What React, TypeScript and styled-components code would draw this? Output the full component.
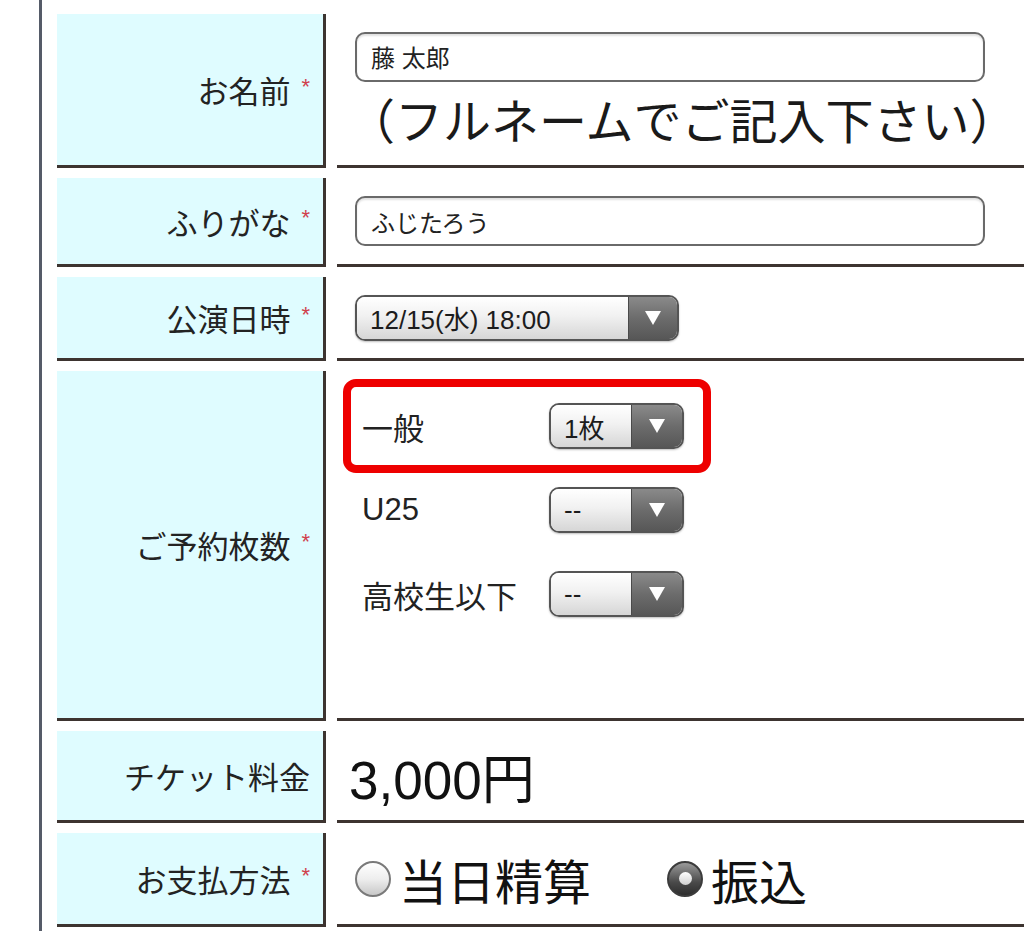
import React from 'react';
import styled, { createGlobalStyle } from 'styled-components';

const GlobalStyle = createGlobalStyle`
  html, body {
    margin: 0;
    padding: 0;
    background: #ffffff;
    overflow: hidden;
  }
  body {
    font-family: 'Liberation Sans', 'Noto Sans CJK JP', sans-serif;
    color: #1e1e1e;
  }
`;

const Page = styled.div`
  margin-left: 39px;
  border-left: 3px solid #555b68;
  min-height: 931px;
  box-sizing: border-box;
  padding: 14px 0 0 15px;
`;

const FormGrid = styled.div`
  display: grid;
  grid-template-columns: 269px 1fr;
  column-gap: 11px;
  row-gap: 10px;
`;

const LabelCell = styled.div<{ $h: number }>`
  height: ${p => p.$h}px;
  box-sizing: border-box;
  background: #dffcff;
  border-right: 3px solid #3d3430;
  border-bottom: 3px solid #3d3430;
  display: flex;
  align-items: center;
  justify-content: flex-end;
  padding-right: 13px;
  font-size: 31px;
  color: #232323;
`;

const Required = styled.span`
  color: #d0404c;
  font-size: 22px;
  margin-left: 11px;
  position: relative;
  top: -3px;
`;

const ValueCell = styled.div<{ $h: number; $top?: boolean }>`
  height: ${p => p.$h}px;
  box-sizing: border-box;
  border-bottom: 3px solid #3d3430;
  display: flex;
  flex-direction: column;
  justify-content: ${p => (p.$top ? 'flex-start' : 'center')};
  align-items: flex-start;
  padding: ${p => (p.$top ? '16px 0 0 14px' : '0 0 0 18px')};
`;

const TextInput = styled.input`
  width: 630px;
  height: 50px;
  box-sizing: border-box;
  border: 2px solid #6a6a6a;
  border-radius: 10px;
  background: #ffffff;
  box-shadow: inset 0 2px 2px rgba(0, 0, 0, 0.12);
  padding: 0 14px;
  font-family: 'Liberation Sans', 'Noto Sans CJK JP', sans-serif;
  font-size: 24px;
  color: #222;
  outline: none;
`;

const Hint = styled.div`
  font-family: 'Noto Sans CJK JP', sans-serif;
  font-size: 48px;
  line-height: 60px;
  margin: 6px 0 0 -8px;
  white-space: nowrap;
  color: #1a1a1a;
`;

const SelectBox = styled.div<{ $w: number }>`
  width: ${p => p.$w}px;
  height: 46px;
  box-sizing: border-box;
  border: 2px solid #555;
  border-radius: 10px;
  overflow: hidden;
  display: flex;
  box-shadow: 0 1px 2px rgba(0, 0, 0, 0.25);
`;

const SelectText = styled.div`
  flex: 1;
  display: flex;
  align-items: center;
  padding-left: 13px;
  font-size: 26px;
  color: #1c1c1c;
  background: linear-gradient(#ffffff, #f1f1f1 45%, #d6d6d6);
  border-right: 1px solid #4a4a4a;
`;

const SelectArrow = styled.div<{ $w: number }>`
  width: ${p => p.$w}px;
  display: flex;
  align-items: center;
  justify-content: center;
  background: linear-gradient(#8a8a8a, #6c6c6c 50%, #575757);

  &::after {
    content: '';
    width: 0;
    height: 0;
    border-left: 8px solid transparent;
    border-right: 8px solid transparent;
    border-top: 14px solid #ffffff;
  }
`;

const TicketList = styled.div`
  display: flex;
  flex-direction: column;
  gap: 6px;
`;

const TicketRow = styled.div<{ $mark?: boolean }>`
  width: 352px;
  height: 78px;
  box-sizing: border-box;
  display: flex;
  align-items: center;
  padding: 0 19px 0 11px;
  border-radius: 5px;
  outline: ${p => (p.$mark ? '8px solid #ee0000' : 'none')};
`;

const TicketName = styled.div`
  width: 187px;
  font-size: 31px;
  color: #222;
`;

const Price = styled.div`
  font-size: 53px;
  color: #111;
  margin-left: -6px;
`;

const RadioGroup = styled.div`
  display: flex;
  align-items: center;
  gap: 76px;
`;

const RadioOption = styled.label`
  display: flex;
  align-items: center;
  gap: 8px;
  font-size: 48px;
  color: #111;
  font-family: 'Noto Sans CJK JP', sans-serif;
`;

const RadioDot = styled.span<{ $on?: boolean }>`
  width: 36px;
  height: 36px;
  box-sizing: border-box;
  border-radius: 50%;
  display: inline-flex;
  align-items: center;
  justify-content: center;
  border: 2px solid ${p => (p.$on ? '#3c3c3c' : '#7a7a7a')};
  background: ${p =>
    p.$on
      ? 'linear-gradient(#9a9a9a, #4a4a4a 60%, #2e2e2e)'
      : 'linear-gradient(#ffffff, #eeeeee 50%, #c8c8c8)'};

  &::after {
    content: '';
    display: ${p => (p.$on ? 'block' : 'none')};
    width: 13px;
    height: 13px;
    border-radius: 50%;
    background: linear-gradient(#ffffff, #d0d0d0);
  }
`;

type Row = { label: string; required: boolean; h: number };

const rows: Row[] = [
  { label: 'お名前', required: true, h: 154 },
  { label: 'ふりがな', required: true, h: 89 },
  { label: '公演日時', required: true, h: 84 },
  { label: 'ご予約枚数', required: true, h: 350 },
  { label: 'チケット料金', required: false, h: 92 },
  { label: 'お支払方法', required: true, h: 94 },
];

const tickets = [
  { name: '一般', value: '1枚', mark: true },
  { name: 'U25', value: '--', mark: false },
  { name: '高校生以下', value: '--', mark: false },
];

const Label = ({ row }: { row: Row }) => (
  <LabelCell $h={row.h}>
    {row.label}
    {row.required && <Required>*</Required>}
  </LabelCell>
);

const ReservationForm = () => {
  return (
    <Page>
      <GlobalStyle />
      <FormGrid>
        <Label row={rows[0]} />
        <ValueCell $h={rows[0].h}>
          <TextInput readOnly value="藤 太郎" />
          <Hint>（フルネームでご記入下さい）</Hint>
        </ValueCell>

        <Label row={rows[1]} />
        <ValueCell $h={rows[1].h}>
          <TextInput readOnly value="ふじたろう" />
        </ValueCell>

        <Label row={rows[2]} />
        <ValueCell $h={rows[2].h}>
          <SelectBox $w={324}>
            <SelectText>12/15(水) 18:00</SelectText>
            <SelectArrow $w={48} />
          </SelectBox>
        </ValueCell>

        <Label row={rows[3]} />
        <ValueCell $h={rows[3].h} $top>
          <TicketList>
            {tickets.map(t => (
              <TicketRow key={t.name} $mark={t.mark}>
                <TicketName>{t.name}</TicketName>
                <SelectBox $w={135}>
                  <SelectText>{t.value}</SelectText>
                  <SelectArrow $w={50} />
                </SelectBox>
              </TicketRow>
            ))}
          </TicketList>
        </ValueCell>

        <Label row={rows[4]} />
        <ValueCell $h={rows[4].h}>
          <Price>3,000円</Price>
        </ValueCell>

        <Label row={rows[5]} />
        <ValueCell $h={rows[5].h}>
          <RadioGroup>
            <RadioOption>
              <RadioDot />
              当日精算
            </RadioOption>
            <RadioOption>
              <RadioDot $on />
              振込
            </RadioOption>
          </RadioGroup>
        </ValueCell>
      </FormGrid>
    </Page>
  );
};

export default ReservationForm;
